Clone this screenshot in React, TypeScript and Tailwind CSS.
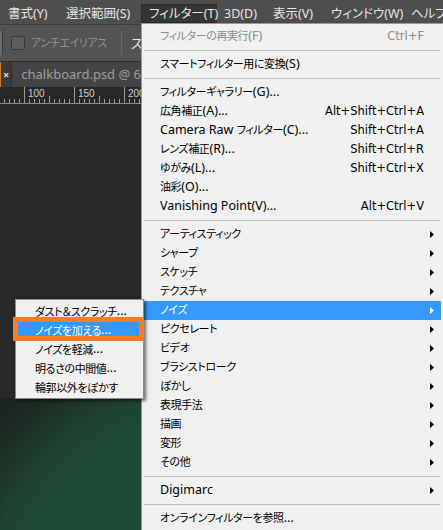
import React from "react";

// メニュー項目の定義
type Item =
  | { kind: "sep" }
  | { kind: "item"; label: string; shortcut?: string; sub?: boolean; disabled?: boolean; active?: boolean };

const filterMenu: Item[] = [
  { kind: "item", label: "フィルターの再実行(F)", shortcut: "Ctrl+F", disabled: true },
  { kind: "sep" },
  { kind: "item", label: "スマートフィルター用に変換(S)" },
  { kind: "sep" },
  { kind: "item", label: "フィルターギャラリー(G)..." },
  { kind: "item", label: "広角補正(A)...", shortcut: "Alt+Shift+Ctrl+A" },
  { kind: "item", label: "Camera Raw フィルター(C)...", shortcut: "Shift+Ctrl+A" },
  { kind: "item", label: "レンズ補正(R)...", shortcut: "Shift+Ctrl+R" },
  { kind: "item", label: "ゆがみ(L)...", shortcut: "Shift+Ctrl+X" },
  { kind: "item", label: "油彩(O)..." },
  { kind: "item", label: "Vanishing Point(V)...", shortcut: "Alt+Ctrl+V" },
  { kind: "sep" },
  { kind: "item", label: "アーティスティック", sub: true },
  { kind: "item", label: "シャープ", sub: true },
  { kind: "item", label: "スケッチ", sub: true },
  { kind: "item", label: "テクスチャ", sub: true },
  { kind: "item", label: "ノイズ", sub: true, active: true },
  { kind: "item", label: "ピクセレート", sub: true },
  { kind: "item", label: "ビデオ", sub: true },
  { kind: "item", label: "ブラシストローク", sub: true },
  { kind: "item", label: "ぼかし", sub: true },
  { kind: "item", label: "表現手法", sub: true },
  { kind: "item", label: "描画", sub: true },
  { kind: "item", label: "変形", sub: true },
  { kind: "item", label: "その他", sub: true },
  { kind: "sep" },
  { kind: "item", label: "Digimarc", sub: true },
  { kind: "sep" },
  { kind: "item", label: "オンラインフィルターを参照..." },
];

const noiseMenu = ["ダスト＆スクラッチ...", "ノイズを加える...", "ノイズを軽減...", "明るさの中間値...", "輪郭以外をぼかす"];

const topMenu = [
  { label: "書式(Y)", w: "w-[58px]" },
  { label: "選択範囲(S)", w: "w-[82px]" },
  { label: "フィルター(T)", w: "w-[76px]", open: true },
  { label: "3D(D)", w: "w-[49px]" },
  { label: "表示(V)", w: "w-[58px]" },
  { label: "ウィンドウ(W)", w: "w-[80px]" },
  { label: "ヘルプ", w: "w-[40px]" },
];

// 和文部分だけ少し詰める（Meiryo UI っぽい字幅に寄せる）
const JP = /([\u3000-\u30ff\u3400-\u9fff\uff00-\uffef]+)/;
const Txt: React.FC<{ s: string }> = ({ s }) => (
  <>
    {s.split(JP).map((p, i) =>
      JP.test(p) ? (
        <span key={i} className="text-[11px] tracking-[-0.4px]">
          {p}
        </span>
      ) : (
        <React.Fragment key={i}>{p}</React.Fragment>
      )
    )}
  </>
);

// サブメニュー矢印
const Arrow: React.FC<{ white?: boolean }> = ({ white }) => (
  <svg width="4" height="7" viewBox="0 0 4 7">
    <path d="M0 0 L4 3.5 L0 7 Z" fill={white ? "#ffffff" : "#000000"} />
  </svg>
);

const Ruler: React.FC = () => {
  const ticks = [];
  for (let x = -1; x < 141; x += 5) {
    const major = (x - 24) % 50 === 0;
    const half = (x - 49) % 50 === 0;
    const len = major ? 16 : half ? 7 : 4;
    ticks.push(<line key={x} x1={x + 0.5} x2={x + 0.5} y1={16 - len} y2={16} stroke="#9a9a9a" strokeWidth="1" />);
  }
  return (
    <svg width="141" height="17" className="block">
      {ticks}
      <line x1="0" x2="141" y1="16.5" y2="16.5" stroke="#8a8a8a" />
      {[100, 150, 200].map((n, i) => (
        <text key={n} x={28 + i * 50} y="10" fontSize="10" fill="#c8ccd2" fontFamily="Liberation Sans, sans-serif">
          {n}
        </text>
      ))}
    </svg>
  );
};

const App: React.FC = () => {
  return (
    <div className="relative w-[443px] h-[530px] overflow-hidden bg-[#282828] font-['Noto_Sans','Noto_Sans_CJK_JP',sans-serif] [font-feature-settings:'palt'] text-[12.5px] leading-none">
      {/* メニューバー */}
      <div className="flex h-[24px] items-stretch bg-[#4e4e4e] pl-[1px] pt-[4px] pb-[1px] overflow-hidden">
        {topMenu.map((m) => (
          <div
            key={m.label}
            className={`${m.w} shrink-0 whitespace-nowrap flex items-center pl-[7px] pt-[2px] text-[#e4e4e4] ${m.open ? "bg-[#363636] border border-[#2c2c2c]" : ""}`}
          >
            {m.label}
          </div>
        ))}
      </div>

      {/* オプションバー（メニューの下に隠れる部分は切る） */}
      <div className="bg-[#535353] border-t border-[#3e3e3e]">
        <div className="flex w-[141px] h-[36px] items-center overflow-hidden">
          <div className="w-[3px] h-[24px] shrink-0 bg-[#6a6a6a] border-r border-[#3c3c3c]" />
          <div className="ml-[8px] w-[14px] h-[14px] shrink-0 rounded-[2px] bg-[#5c5c5c] border border-[#3a3a3a]" />
          <span className="ml-[6px] text-[#8e8e8e] whitespace-nowrap">
            <Txt s="アンチエイリアス" />
          </span>
          <div className="ml-[14px] w-[1px] h-[24px] shrink-0 bg-[#3a3a3a] border-r border-[#666]" />
          <span className="ml-[9px] text-[#eaeaea] text-[13px] whitespace-nowrap">ス</span>
        </div>
      </div>

      {/* タブバー */}
      <div className="bg-[#444444] border-t border-[#2e2e2e]">
        <div className="flex w-[141px] h-[25px] items-stretch overflow-hidden">
          <div className="w-[2px] bg-[#d87a2a]" />
          <div className="w-[26px] flex items-center justify-center bg-[#3b3b3b] text-[#d8d8d8] text-[11px] font-bold border-r border-[#2f2f2f]">
            ×
          </div>
          <div className="flex-1 flex items-center pl-[9px] text-[#9c9c9c] text-[13px] whitespace-nowrap">chalkboard.psd @ 6</div>
        </div>
      </div>

      {/* ルーラー */}
      <Ruler />

      {/* キャンバス */}
      <div className="h-[294px] bg-[#282828]" />
      <div className="h-[200px] bg-[radial-gradient(circle_at_230px_230px,#1f4c37_0px,#1f4c37_215px,#1e4332_245px,#1b2d24_290px,#191f1c_335px)]" />

      {/* フィルターメニュー */}
      <div className="absolute left-[141px] top-[23px] w-[304px] h-[520px] bg-[#f0f0f0] border border-[#979797] pt-[3px] shadow-[2px_2px_3px_rgba(0,0,0,0.4)]">
        {filterMenu.map((it, i) =>
          it.kind === "sep" ? (
            <div key={i} className="h-[9px] flex items-center mx-[2px] pr-[2px]">
              <div className="h-[1px] w-full bg-[#bdbdbd]" />
            </div>
          ) : (
            <div
              key={i}
              className={`h-[19px] mx-[2px] mr-[3px] flex items-center whitespace-nowrap pl-[16px] pr-[7px] ${it.active ? "bg-[#3399ff] text-white" : it.disabled ? "text-[#8d8d8d]" : "text-black"}`}
            >
              <span className="flex-1">
                <Txt s={it.label} />
              </span>
              {it.shortcut && (
                <span className="mr-[10px] font-['DejaVu_Sans',sans-serif] text-[11.5px]">{it.shortcut}</span>
              )}
              {it.sub && <Arrow white={it.active} />}
            </div>
          )
        )}
      </div>

      {/* ノイズ サブメニュー */}
      <div className="absolute left-[15px] top-[299px] w-[129px] bg-[#f0f0f0] border border-[#8a8a8a] pt-[2px] pb-[1px] shadow-[2px_2px_3px_rgba(0,0,0,0.55)]">
        {noiseMenu.map((label, i) => (
          <div
            key={label}
            className={`h-[19px] mx-[1px] flex items-center whitespace-nowrap pl-[18px] ${i === 1 ? "bg-[#3399ff] text-white" : "text-black"}`}
          >
            <Txt s={label} />
          </div>
        ))}
      </div>

      {/* 注目枠 */}
      <div className="absolute left-[13px] top-[317px] w-[131px] h-[24px] border-[5px] border-[#fb7d1f]" />
    </div>
  );
};

export default App;
